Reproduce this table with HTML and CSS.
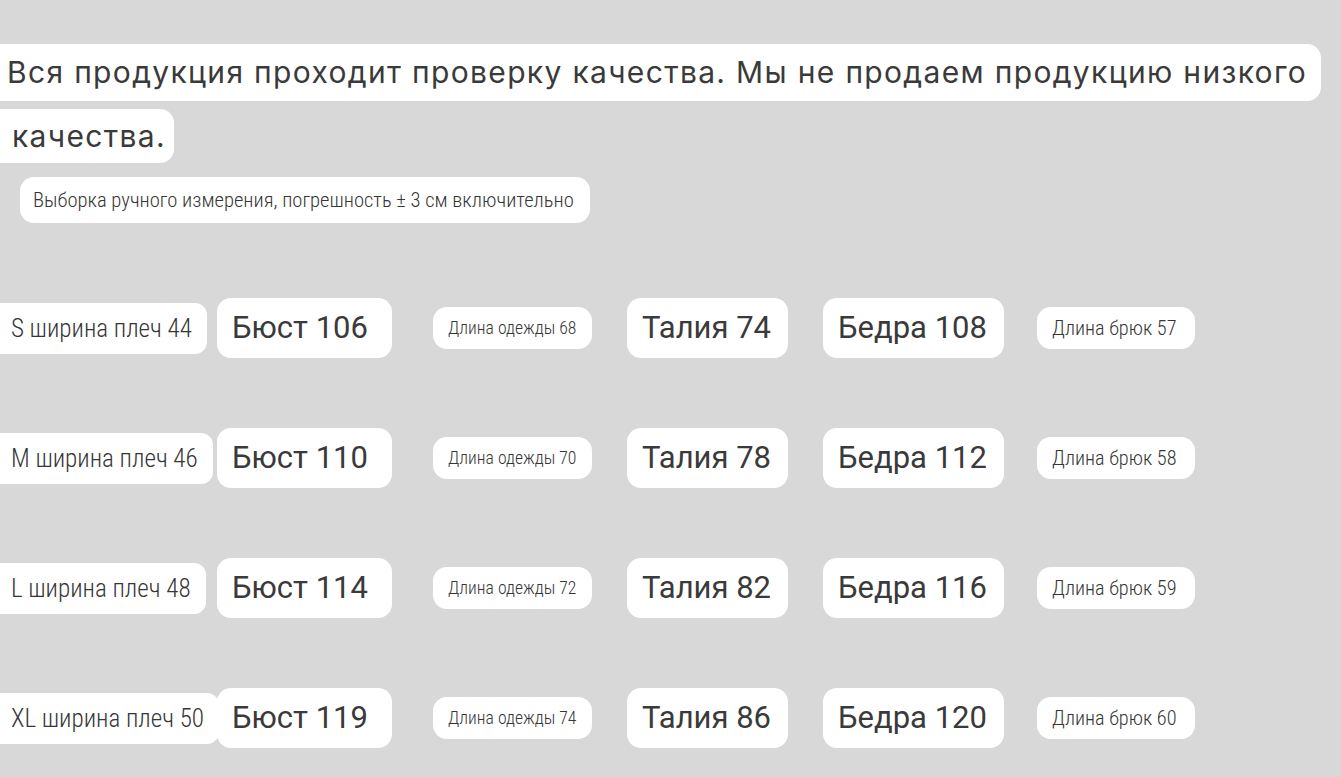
FILE: index.html
```html
<!DOCTYPE html>
<html lang="ru">
<head>
<meta charset="utf-8">
<title>Размеры</title>
<link rel="stylesheet" href="styles.css">
</head>
<body>
<main class="page">
  <section class="notice">
    <p class="line line-first">Вся продукция проходит проверку качества. Мы не продаем продукцию низкого</p>
    <p class="line line-second">качества.</p>
    <p class="hint">Выборка ручного измерения, погрешность ± 3 см включительно</p>
  </section>
  <section class="sizes">
    <div class="row">
      <span class="pill side">S ширина плеч 44</span>
      <span class="pill big bust">Бюст 106</span>
      <span class="pill small">Длина одежды 68</span>
      <span class="pill big">Талия 74</span>
      <span class="pill big">Бедра 108</span>
      <span class="pill small small-wide">Длина брюк 57</span>
    </div>
    <div class="row">
      <span class="pill side">M ширина плеч 46</span>
      <span class="pill big bust">Бюст 110</span>
      <span class="pill small">Длина одежды 70</span>
      <span class="pill big">Талия 78</span>
      <span class="pill big">Бедра 112</span>
      <span class="pill small small-wide">Длина брюк 58</span>
    </div>
    <div class="row">
      <span class="pill side">L ширина плеч 48</span>
      <span class="pill big bust">Бюст 114</span>
      <span class="pill small">Длина одежды 72</span>
      <span class="pill big">Талия 82</span>
      <span class="pill big">Бедра 116</span>
      <span class="pill small small-wide">Длина брюк 59</span>
    </div>
    <div class="row">
      <span class="pill side">XL ширина плеч 50</span>
      <span class="pill big bust">Бюст 119</span>
      <span class="pill small">Длина одежды 74</span>
      <span class="pill big">Талия 86</span>
      <span class="pill big">Бедра 120</span>
      <span class="pill small small-wide">Длина брюк 60</span>
    </div>
  </section>
</main>
</body>
</html>
```
FILE: styles.css
```css
html, body {
  margin: 0;
  padding: 0;
}
body {
  background: #d8d8d8;
  color: #3a3a3a;
  font-family: Roboto, "Noto Sans", sans-serif;
  width: 1341px;
  height: 777px;
  overflow: hidden;
}
.page {
  padding-top: 44px;
}
.notice {
  display: flex;
  flex-direction: column;
  align-items: flex-start;
}
.line {
  margin: 0;
  background: #fff;
  font-family: Inter, Roboto, sans-serif;
  font-size: 30px;
  letter-spacing: 1.33px;
  white-space: nowrap;
  margin-left: -20px;
}
.line-first {
  height: 57px;
  line-height: 57px;
  padding: 0 14px 0 27px;
  border-radius: 14px;
}
.line-second {
  margin-top: 8px;
  height: 54px;
  line-height: 54px;
  padding: 0 8px 0 32px;
  border-radius: 14px;
}
.hint, .side, .small {
  font-family: "Roboto Condensed", "Liberation Sans Narrow", "DejaVu Sans Condensed", Roboto, sans-serif;
  font-stretch: condensed;
  font-weight: 350;
  color: #363636;
}
.hint {
  margin: 14px 0 0 20px;
  background: #fff;
  height: 46px;
  line-height: 46px;
  padding: 0 16px 0 13px;
  border-radius: 14px;
  font-size: 20.6px;
  white-space: nowrap;
}
.sizes {
  margin-top: 40px;
}
.row {
  display: grid;
  grid-template-columns: 217px 216px 194px 196px 214px auto;
  align-items: center;
  justify-items: start;
  height: 130px;
}
.pill {
  background: #fff;
  white-space: nowrap;
  border-radius: 14px;
}
.side {
  margin-left: -16px;
  height: 51px;
  line-height: 51px;
  padding: 0 15px 0 27px;
  font-size: 25.1px;
  border-radius: 12px;
}
.big {
  height: 60px;
  line-height: 60px;
  padding: 0 17px 0 15px;
  font-size: 31px;
}
.bust {
  padding-right: 24px;
}
.small {
  height: 42px;
  line-height: 42px;
  padding: 0 16px 0 15px;
  font-size: 17.7px;
}
.small-wide {
  font-size: 20.3px;
  padding-right: 18px;
}
```
